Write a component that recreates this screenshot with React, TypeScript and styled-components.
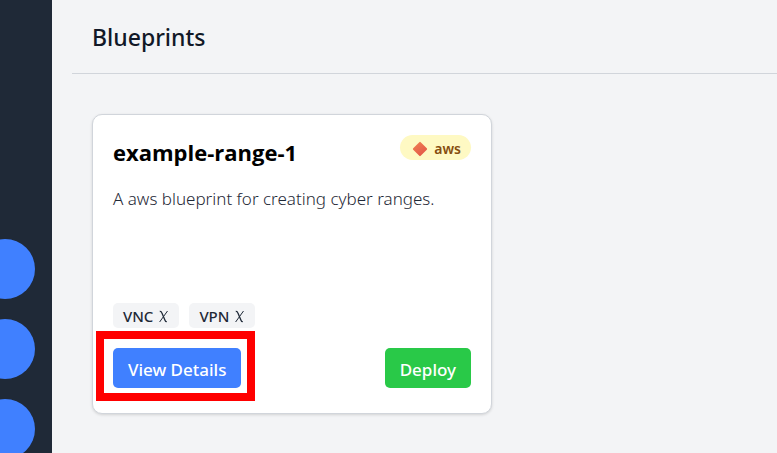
import React from "react";
import styled, { createGlobalStyle } from "styled-components";

const GlobalStyle = createGlobalStyle`
  *, *::before, *::after { box-sizing: border-box; }
  body {
    margin: 0;
    background: #f3f4f6;
    font-family: "Noto Sans", "Open Sans", sans-serif;
    color: #111827;
  }
  h1, h2, p, ul { margin: 0; padding: 0; }
  button { font-family: inherit; border: 0; cursor: pointer; }
`;

const Page = styled.div`
  display: flex;
  height: 100vh;
  overflow: hidden;
`;

const Sidebar = styled.nav`
  flex: 0 0 52px;
  display: flex;
  flex-direction: column;
  align-items: flex-end;
  gap: 20px;
  padding: 239px 17px 0 0;
  overflow: hidden;
  background: #1f2937;
`;

const NavButton = styled.button`
  flex: none;
  width: 60px;
  height: 60px;
  padding: 0;
  border-radius: 50%;
  background: #4080ff;
`;

const Main = styled.main`
  flex: 1;
  min-width: 0;
  padding-left: 20px;
`;

const Header = styled.header`
  padding: 20px 20px 18px;
  border-bottom: 1px solid #d1d5db;
`;

const PageTitle = styled.h1`
  font-size: 23px;
  line-height: 35px;
  font-weight: 500;
`;

const CardList = styled.section`
  display: grid;
  grid-template-columns: minmax(0, 400px);
  padding: 40px 20px;
`;

const Card = styled.article`
  display: flex;
  flex-direction: column;
  min-height: 300px;
  padding: 20px;
  border: 1px solid #d1d5db;
  border-radius: 10px;
  background: #fff;
  box-shadow: 0 1px 3px rgba(0, 0, 0, 0.14);
`;

const CardTop = styled.div`
  display: flex;
  justify-content: space-between;
  align-items: flex-start;
`;

const CardTitle = styled.h2`
  font-family: "Open Sans", "Noto Sans", sans-serif;
  font-size: 22px;
  line-height: 35px;
  font-weight: 700;
  color: #000;
`;

const Provider = styled.span`
  display: flex;
  align-items: center;
  gap: 6px;
  height: 25px;
  padding: 2px 10px 0 12px;
  border-radius: 13px;
  background: #fef9c3;
  color: #854d0e;
  font-size: 14px;
  font-weight: 600;
  line-height: 23px;
`;

const Description = styled.p`
  margin-top: 15px;
  font-size: 17px;
  line-height: 28px;
  font-weight: 300;
  color: #1f2937;
`;

const Tags = styled.ul`
  display: flex;
  gap: 10px;
  margin-top: auto;
  list-style: none;
`;

const Tag = styled.li`
  display: flex;
  align-items: center;
  gap: 6px;
  height: 25px;
  padding: 2px 11px 0 10px;
  border-radius: 5px;
  background: #f3f4f6;
  color: #1f2937;
  font-size: 15px;
  line-height: 23px;
  font-weight: 500;
`;

const Actions = styled.div`
  display: flex;
  justify-content: space-between;
  margin-top: 20px;
  padding-bottom: 5px;
`;

const Action = styled.button<{ $color: string }>`
  height: 40px;
  padding: 3px 15px 0;
  border-radius: 5px;
  background: ${(p) => p.$color};
  color: #fff;
  font-size: 17px;
  font-weight: 500;
  white-space: nowrap;
`;

const Highlighted = styled.div`
  position: relative;
  &::after {
    content: "";
    position: absolute;
    inset: -17px -14px -13px -17px;
    border: 8px solid #f00;
    pointer-events: none;
  }
`;

const Diamond = () => (
  <svg width="16" height="16" viewBox="0 0 16 16" aria-hidden="true">
    <defs>
      <linearGradient id="diamond" x1="0" y1="0" x2="0.7" y2="1">
        <stop offset="0" stopColor="#ef8354" />
        <stop offset="1" stopColor="#e45747" />
      </linearGradient>
    </defs>
    <path
      d="M7.3 1.2Q8 .5 8.7 1.2L14.8 7.3Q15.5 8 14.8 8.7L8.7 14.8Q8 15.5 7.3 14.8L1.2 8.7Q.5 8 1.2 7.3Z"
      fill="url(#diamond)"
    />
  </svg>
);

const Cross = () => (
  <svg width="9" height="13" viewBox="0 0 9 13" role="img" aria-label="Not available">
    <path d="M.8 1.5Q2.2 1.2 2.8 2.8L6.1 10.5Q6.7 11.9 7.8 11.5" fill="none" stroke="#1f2937" strokeWidth="1.3" />
    <path d="M8.5 1L.6 12" fill="none" stroke="#1f2937" strokeWidth="1" />
  </svg>
);

const navItems = ["Home", "Ranges", "Blueprints"];
const features = ["VNC", "VPN"];

export default function App() {
  return (
    <>
      <GlobalStyle />
      <Page>
        <Sidebar aria-label="Main">
          {navItems.map((item) => (
            <NavButton key={item} type="button" aria-label={item} />
          ))}
        </Sidebar>
        <Main>
          <Header>
            <PageTitle>Blueprints</PageTitle>
          </Header>
          <CardList>
            <Card>
              <CardTop>
                <CardTitle>example-range-1</CardTitle>
                <Provider>
                  <Diamond />
                  aws
                </Provider>
              </CardTop>
              <Description>A aws blueprint for creating cyber ranges.</Description>
              <Tags>
                {features.map((feature) => (
                  <Tag key={feature}>
                    {feature}
                    <Cross />
                  </Tag>
                ))}
              </Tags>
              <Actions>
                <Highlighted>
                  <Action type="button" $color="#4080ff">View Details</Action>
                </Highlighted>
                <Action type="button" $color="#29c948">Deploy</Action>
              </Actions>
            </Card>
          </CardList>
        </Main>
      </Page>
    </>
  );
}
